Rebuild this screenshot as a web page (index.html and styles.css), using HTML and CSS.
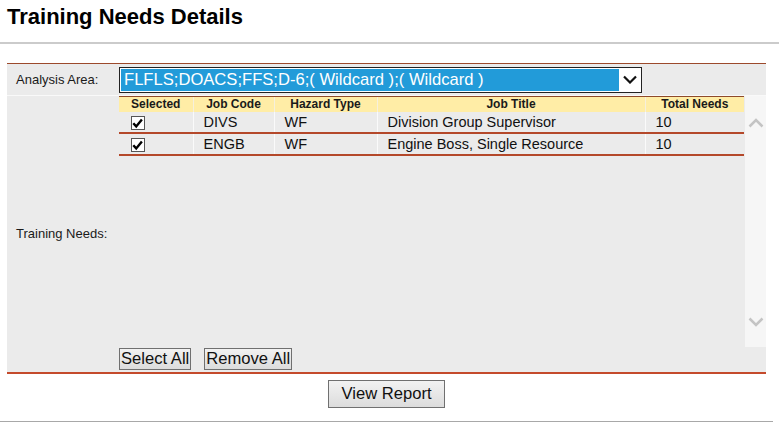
FILE: index.html
```html
<!DOCTYPE html>
<html>
<head>
<meta charset="utf-8">
<title>Training Needs Details</title>
<link rel="stylesheet" href="styles.css">
</head>
<body>
<div class="page-header"><h1 class="title">Training Needs Details</h1></div>
<div class="panel">
  <div class="row row-area">
    <div class="label">Analysis Area:</div>
    <div class="field">
      <div class="select">
        <span class="select-value">FLFLS;DOACS;FFS;D-6;( Wildcard );( Wildcard )</span>
        <span class="select-arrow"><svg width="14" height="9" viewBox="0 0 14 9"><path d="M1 1.5 L7 7.5 L13 1.5" fill="none" stroke="#111" stroke-width="2.2"/></svg></span>
      </div>
    </div>
  </div>
  <div class="row row-needs">
    <div class="label">Training Needs:</div>
    <div class="field">
      <div class="grid-wrap">
        <div class="grid-area">
          <table class="grid">
            <colgroup>
              <col class="c1"><col class="c2"><col class="c3"><col class="c4"><col class="c5">
            </colgroup>
            <thead>
              <tr><th>Selected</th><th>Job Code</th><th>Hazard Type</th><th>Job Title</th><th>Total Needs</th></tr>
            </thead>
            <tbody>
              <tr><td class="cb"><span class="check"><svg width="11" height="11" viewBox="0 0 11 11"><path d="M1.3 5.3 L4.2 8.4 L9.9 1.6" fill="none" stroke="#000" stroke-width="2.4"/></svg></span></td><td>DIVS</td><td>WF</td><td>Division Group Supervisor</td><td>10</td></tr>
              <tr><td class="cb"><span class="check"><svg width="11" height="11" viewBox="0 0 11 11"><path d="M1.3 5.3 L4.2 8.4 L9.9 1.6" fill="none" stroke="#000" stroke-width="2.4"/></svg></span></td><td>ENGB</td><td>WF</td><td>Engine Boss, Single Resource</td><td>10</td></tr>
            </tbody>
          </table>
        </div>
        <div class="scrollbar">
          <svg width="16" height="10" viewBox="0 0 16 10"><path d="M1.5 8.5 L8 2 L14.5 8.5" fill="none" stroke="#c4c4c4" stroke-width="2.5"/></svg>
          <svg width="16" height="10" viewBox="0 0 16 10"><path d="M1.5 1.5 L8 8 L14.5 1.5" fill="none" stroke="#c4c4c4" stroke-width="2.5"/></svg>
        </div>
      </div>
      <div class="actions">
        <button class="btn small">Select All</button>
        <button class="btn small">Remove All</button>
      </div>
    </div>
  </div>
</div>
<div class="footer">
  <button class="btn report">View Report</button>
</div>
</body>
</html>
```
FILE: styles.css
```css
html, body {
  margin: 0;
  padding: 0;
  background: #fff;
  font-family: "Liberation Sans", Arial, sans-serif;
  color: #111;
}
.page-header {
  height: 44px;
  box-sizing: border-box;
  padding: 4px 7px 0;
  border-bottom: 2px solid #cbcbcb;
}
.title {
  margin: 0;
  font-size: 22px;
  line-height: 25px;
  font-weight: bold;
  color: #000;
}
.panel {
  margin: 19px 0 0 7px;
  width: 759px;
  border-top: 1px solid #9c4a2c;
  border-bottom: 2px solid #c44a2c;
}
.row {
  display: flex;
  background: #ebebeb;
}
.row-area {
  height: 31px;
  align-items: center;
  border-bottom: 1px solid #f9f9f9;
}
.label {
  width: 103px;
  padding-left: 9px;
  font-size: 13px;
  color: #1a1a1a;
}
.row-needs .label {
  align-self: center;
}
.field {
  flex: 1;
}
.select {
  display: flex;
  width: 521px;
  height: 24px;
  border: 1px solid #222;
  background: #fff;
}
.select-value {
  flex: 1;
  margin: 1px 0 1px 1px;
  background: #229bd9;
  color: #fff;
  font-size: 16.6px;
  line-height: 22px;
  padding-left: 3px;
  white-space: nowrap;
  overflow: hidden;
}
.select-arrow {
  width: 22px;
  display: flex;
  align-items: center;
  justify-content: center;
}
.row-needs {
  padding-bottom: 1px;
}
.grid-wrap {
  display: flex;
  height: 251px;
}
.grid-area {
  width: 625px;
}
.scrollbar {
  width: 21px;
  margin-left: 1px;
  background: #f6f6f6;
  display: flex;
  flex-direction: column;
  justify-content: space-between;
  align-items: center;
  padding: 22px 0 20px;
  box-sizing: border-box;
}
.grid {
  width: 625px;
  border-collapse: collapse;
  table-layout: fixed;
}
.grid col.c1 { width: 74px; }
.grid col.c2 { width: 81px; }
.grid col.c3 { width: 103px; }
.grid col.c4 { width: 268px; }
.grid col.c5 { width: 99px; }
.grid th {
  background: #ffeda6;
  border-top: 1px solid #8e4a2a;
  border-left: 1px solid #f6f0dc;
  height: 15px;
  padding: 0;
  font-size: 12px;
  font-weight: bold;
  color: #1a1a1a;
  text-align: center;
  line-height: 15px;
}
.grid th:first-child, .grid td:first-child {
  border-left: none;
}
.grid td {
  background: #ebebeb;
  border-left: 1px solid #fafafa;
  border-bottom: 2px solid #b4482a;
  height: 20px;
  padding: 0 0 0 10px;
  font-size: 14.5px;
  line-height: 20px;
  color: #111;
  white-space: nowrap;
}
.grid td.cb {
  padding-left: 12px;
}
.check {
  display: block;
  width: 14px;
  height: 14px;
  border: 1px solid #555;
  background: #fff;
  box-sizing: border-box;
  position: relative;
  top: 1px;
}
.check svg {
  display: block;
  margin: 1px 0 0 0;
}
.actions {
  display: flex;
  gap: 13px;
  height: 23px;
  padding-top: 1px;
}
.btn {
  font-family: "Liberation Sans", Arial, sans-serif;
  font-size: 16.6px;
  color: #111;
  background: linear-gradient(#f2f2f2, #dcdcdc);
  border: 1px solid #707070;
  border-radius: 0;
  padding: 0;
  margin: 0;
}
.btn.small {
  height: 22px;
  line-height: 20px;
  padding: 0 1px;
}
.footer {
  display: flex;
  justify-content: center;
  padding: 6px 0 0 0;
  height: 41px;
  border-bottom: 2px solid #a8a8a8;
  width: 773px;
}
.btn.report {
  width: 117px;
  height: 28px;
  line-height: 26px;
}
```
